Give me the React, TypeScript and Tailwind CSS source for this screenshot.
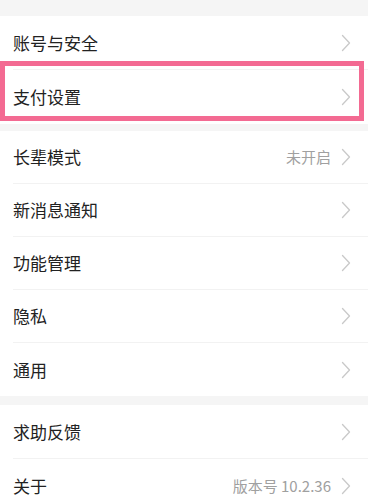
import React from "react";

const Chevron = () => (
  <svg width="10" height="18" viewBox="0 0 10 18" fill="none" className="shrink-0">
    <path d="M1.5 1.5 L8.5 9 L1.5 16.5" stroke="#c9c9c9" strokeWidth="1.3" strokeLinecap="round" strokeLinejoin="round" />
  </svg>
);

type Item = { label: string; value?: string; highlight?: boolean };

const Row = ({ item, last, h }: { item: Item; last: boolean; h: string }) => (
  <div className={`relative flex items-center pl-[13px] ${h}`}>
    <div className={`flex flex-1 h-full items-center pr-[17px] ${last ? "" : "border-b border-[#f2f2f2]"}`}>
      <span className="flex-1 text-[17px] text-[#222222]">{item.label}</span>
      {item.value && <span className="mr-[10px] text-[15px] text-[#a0a0a0]">{item.value}</span>}
      <Chevron />
    </div>
    {item.highlight && (
      <div className="absolute left-0 right-[4px] top-[-9px] bottom-[3px] border-[5px] border-[#f36a92] pointer-events-none" />
    )}
  </div>
);

const Group = ({ items, h }: { items: Item[]; h: string }) => (
  <div className="bg-white">
    {items.map((it, i) => (
      <Row key={it.label} item={it} last={i === items.length - 1} h={h} />
    ))}
  </div>
);

export default function App() {
  return (
    <div
      className="w-[368px] h-[495px] overflow-hidden bg-[#f5f5f5] pt-[16px]"
      style={{ fontFamily: '"Noto Sans CJK SC", "Noto Sans", sans-serif' }}
    >
      <Group h="h-[54px]" items={[{ label: "账号与安全" }, { label: "支付设置", highlight: true }]} />
      <div className="h-[7px]" />
      <Group
        h="h-[53px]"
        items={[
          { label: "长辈模式", value: "未开启" },
          { label: "新消息通知" },
          { label: "功能管理" },
          { label: "隐私" },
          { label: "通用" },
        ]}
      />
      <div className="h-[9px]" />
      <Group h="h-[54px]" items={[{ label: "求助反馈" }, { label: "关于", value: "版本号 10.2.36" }]} />
    </div>
  );
}
